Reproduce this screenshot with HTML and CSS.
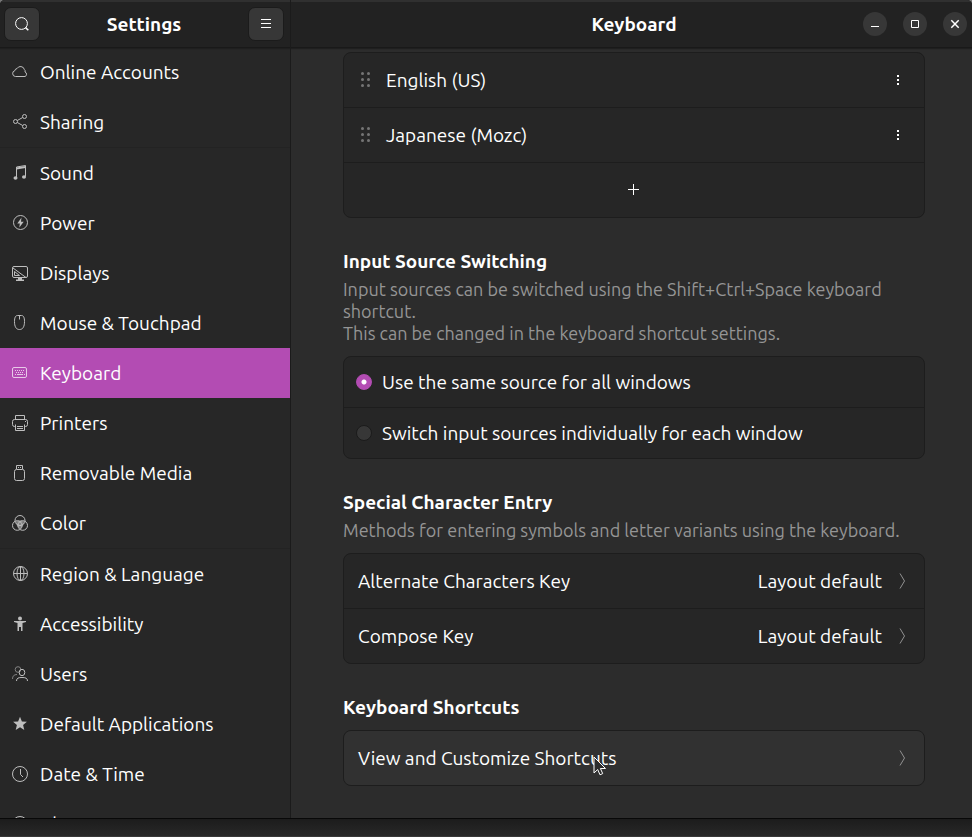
FILE: index.html
```html
<!DOCTYPE html>
<html lang="en">
<head>
<meta charset="utf-8">
<title>Settings</title>
<link rel="stylesheet" href="styles.css">
</head>
<body>
<div class="window">
  <aside class="sidebar">
    <header class="bar bar-side">
      <button class="tool" type="button" aria-label="Search">
        <svg viewBox="0 0 16 16"><circle cx="7.5" cy="7.5" r="5.9"/><path d="M11.5 11.5L14.3 14.3" stroke-width="1.6"/></svg>
      </button>
      <h1>Settings</h1>
      <button class="tool" type="button" aria-label="Menu">
        <svg viewBox="0 0 16 16"><path d="M3 3.5h10M3 7.5h10M3 11.5h10"/></svg>
      </button>
    </header>
    <nav class="panels">
      <ul>
        <li><a href="#"><svg viewBox="0 0 16 16"><path d="M3.500 12.500a3 3 0 0 1-.6-5.900A2.300 2.300 0 0 1 5 4.600 4 4 0 0 1 12.400 5.600a2 2 0 0 1 .6 2.400 2.400 2.400 0 0 1 0 4.500z"/></svg>Online Accounts</a></li>
        <li><a href="#"><svg viewBox="0 0 16 16"><circle cx="3.500" cy="7.500" r="2"/><circle cx="12.500" cy="2.500" r="2"/><circle cx="12.500" cy="12.500" r="2"/><path d="M5.300 6.500l5.400-3M5.300 8.500l5.400 3"/></svg>Sharing</a></li>
      </ul>
      <ul>
        <li><a href="#"><svg viewBox="0 0 16 16"><path d="M4.500 12.500V2l9-1.500v11"/><path d="M4.500 2.500l9-1.500v2l-9 1.500z" class="solid"/><ellipse cx="3.500" cy="13" rx="2" ry="1.800" class="solid"/><ellipse cx="12" cy="12" rx="2" ry="1.800" class="solid"/></svg>Sound</a></li>
        <li><a href="#"><svg viewBox="0 0 16 16"><circle cx="8.500" cy="7.500" r="7"/><path d="M9.500 2.500L5.300 8.500h2.500L7.300 12.500l4.400-5.700H9z" class="solid"/></svg>Power</a></li>
        <li><a href="#"><svg viewBox="0 0 16 16"><rect x=".5" y="1.500" width="15" height="11" rx="1.500"/><path d="M1 3l13 9.500M2.500 6.500v4h5z"/><path d="M6 13h4v1.500h2V16H4v-1.500h2z" class="solid"/></svg>Displays</a></li>
        <li><a href="#"><svg viewBox="0 0 16 16"><path d="M5.500 .5h4c2 0 3 2 3 6 0 5-1.500 8-5 8s-5-3-5-8c0-4 1-6 3-6z"/><path d="M7.500 1v3.500"/></svg>Mouse &amp; Touchpad</a></li>
        <li><a href="#" class="current" aria-current="page"><svg viewBox="0 0 16 16"><rect x=".5" y="2.500" width="14" height="10" rx="1.500"/><path d="M3 5.500h9M4 7.500h8M3 9.500h1M12 9.500h1" stroke-dasharray="1 1"/><path d="M5 9.500h6"/></svg>Keyboard</a></li>
        <li><a href="#"><svg viewBox="0 0 16 16"><path d="M3.500 4V.5h9V4M3.500 11.500h-1a2 2 0 0 1-2-2v-3a2 2 0 0 1 2-2h11a2 2 0 0 1 2 2v3a2 2 0 0 1-2 2h-1M3.500 9.500v6h9v-6M5 11.500h6M5 13.500h6M13 6.500h1"/></svg>Printers</a></li>
        <li><a href="#"><svg viewBox="0 0 16 16"><path d="M4.500 4V.5h6V4M6 2.500h1M8 2.500h1"/><rect x="2.500" y="4.500" width="10" height="11" rx="2"/></svg>Removable Media</a></li>
        <li><a href="#"><svg viewBox="0 0 16 16"><path d="M4 6.500c2-1.500 6-1.500 8 0 0 3-1 5-4 7.500-3-2.500-4-4.500-4-7.500z" class="solid dim"/><circle cx="8" cy="5.500" r="5"/><circle cx="5.300" cy="10.500" r="4.800"/><circle cx="10.700" cy="10.500" r="4.800"/></svg>Color</a></li>
      </ul>
      <ul>
        <li><a href="#"><svg viewBox="0 0 16 16"><circle cx="8.500" cy="7.500" r="7"/><ellipse cx="8.500" cy="7.500" rx="3.500" ry="7"/><path d="M1.500 7.500h14M8.500 .5v14"/></svg>Region &amp; Language</a></li>
        <li><a href="#"><svg viewBox="0 0 16 16"><circle cx="8" cy="2.500" r="2" class="solid"/><path d="M2 5h12v1l-3.500 1v8H9v-4H7v4H5.500V7L2 6z" class="solid"/></svg>Accessibility</a></li>
        <li><a href="#"><svg viewBox="0 0 16 16"><g class="dim"><circle cx="6" cy="3.500" r="2.800"/><path d="M.5 13c0-3 1.500-4.500 4.500-4.500"/></g><ellipse cx="10" cy="6.500" rx="2.800" ry="3.200"/><path d="M4.500 15c0-3 2-3.500 5.500-3.500s5.500 .5 5.500 3.500"/></svg>Users</a></li>
        <li><a href="#"><svg viewBox="0 0 16 16"><path d="M8 .8l1.900 4.600 5 .4-3.800 3.200 1.200 4.900L8 11.300l-4.300 2.600 1.200-4.900L1.100 5.800l5-.4z" class="solid"/></svg>Default Applications</a></li>
        <li><a href="#"><svg viewBox="0 0 16 16"><circle cx="8" cy="8" r="7.500"/><path d="M8.500 3v5.500l2.500 2.500"/></svg>Date &amp; Time</a></li>
        <li><a href="#"><svg viewBox="0 0 16 16"><circle cx="8" cy="8" r="7.500"/><path d="M8 7v5M8 4v1.500"/></svg>About</a></li>
      </ul>
    </nav>
  </aside>
  <section class="panel">
    <header class="bar bar-main">
      <h2>Keyboard</h2>
      <div class="controls">
        <button type="button" aria-label="Minimize"><svg viewBox="0 0 16 16"><path d="M4 10.500h8"/></svg></button>
        <button type="button" aria-label="Maximize"><svg viewBox="0 0 16 16"><path d="M4.500 4.500h7v7h-7z"/></svg></button>
        <button type="button" aria-label="Close"><svg viewBox="0 0 16 16"><path d="M4.300 4.300l7.400 7.400M11.700 4.300l-7.400 7.400" stroke-width="1.500"/></svg></button>
      </div>
    </header>
    <main class="content">
      <section>
        <ul class="card">
          <li class="row"><svg class="grip" viewBox="0 0 16 16"><circle cx="4.500" cy="1.500" r="1.500"/><circle cx="10.500" cy="1.500" r="1.500"/><circle cx="4.500" cy="7.500" r="1.500"/><circle cx="10.500" cy="7.500" r="1.500"/><circle cx="4.500" cy="13.500" r="1.500"/><circle cx="10.500" cy="13.500" r="1.500"/></svg><span class="name">English (US)</span><button class="more" type="button" aria-label="Options for English (US)"><svg viewBox="0 0 16 16"><path d="M7 3h2v2H7zM7 7h2v2H7zM7 11h2v2H7z"/></svg></button></li>
          <li class="row"><svg class="grip" viewBox="0 0 16 16"><circle cx="4.500" cy="1.500" r="1.500"/><circle cx="10.500" cy="1.500" r="1.500"/><circle cx="4.500" cy="7.500" r="1.500"/><circle cx="10.500" cy="7.500" r="1.500"/><circle cx="4.500" cy="13.500" r="1.500"/><circle cx="10.500" cy="13.500" r="1.500"/></svg><span class="name">Japanese (Mozc)</span><button class="more" type="button" aria-label="Options for Japanese (Mozc)"><svg viewBox="0 0 16 16"><path d="M7 3h2v2H7zM7 7h2v2H7zM7 11h2v2H7z"/></svg></button></li>
          <li><button class="row add" type="button" aria-label="Add input source"><svg viewBox="0 0 16 16"><path d="M7.500 2v11M2 7.500h11"/></svg></button></li>
        </ul>
      </section>
      <section>
        <h3>Input Source Switching</h3>
        <p>Input sources can be switched using the Shift+Ctrl+Space keyboard shortcut.<br>This can be changed in the keyboard shortcut settings.</p>
        <div class="card">
          <label class="row option"><input type="radio" name="switching" checked>Use the same source for all windows</label>
          <label class="row option"><input type="radio" name="switching">Switch input sources individually for each window</label>
        </div>
      </section>
      <section>
        <h3>Special Character Entry</h3>
        <p>Methods for entering symbols and letter variants using the keyboard.</p>
        <div class="card">
          <button class="row" type="button"><span class="name">Alternate Characters Key</span><span>Layout default</span><svg class="chevron" viewBox="0 0 16 16"><path d="M6 .5l4.500 7.500L6 15.500"/></svg></button>
          <button class="row" type="button"><span class="name">Compose Key</span><span>Layout default</span><svg class="chevron" viewBox="0 0 16 16"><path d="M6 .5l4.500 7.500L6 15.500"/></svg></button>
        </div>
      </section>
      <section>
        <h3>Keyboard Shortcuts</h3>
        <div class="card shortcuts">
          <button class="row hovered" type="button"><span class="name">View and Customize Shortcuts</span><svg class="chevron" viewBox="0 0 16 16"><path d="M6 .5l4.500 7.500L6 15.500"/></svg></button>
          <svg class="pointer" viewBox="0 0 14 20"><path d="M1 1v16l3.700-3.500 2.300 5.300 2.700-1.200-2.300-5.100h5.100z"/></svg>
        </div>
      </section>
    </main>
  </section>
</div>
<div class="backdrop"></div>
</body>
</html>
```
FILE: styles.css
```css
* {
  box-sizing: border-box;
}

body {
  margin: 0;
  height: 100vh;
  display: flex;
  flex-direction: column;
  overflow: hidden;
  background: #777;
  color: #fff;
  font: 19px/22px Ubuntu, "Noto Sans", sans-serif;
}

h1, h2, h3, p, ul {
  margin: 0;
  padding: 0;
  font-size: inherit;
}

ul {
  list-style: none;
}

button {
  margin: 0;
  padding: 0;
  border: 0;
  background: none;
  color: inherit;
  font: inherit;
  text-align: left;
}

svg {
  display: block;
  flex: none;
  width: 16px;
  height: 16px;
  fill: none;
  stroke: currentColor;
}

.solid {
  fill: currentColor;
  stroke: none;
}

.dim {
  opacity: 0.6;
}

.window {
  flex: 1;
  min-height: 0;
  display: grid;
  grid-template-columns: 291px 1fr;
  border-bottom: 1px solid #080808;
  border-radius: 5px 5px 0 0;
  overflow: hidden;
}

.sidebar, .panel {
  min-width: 0;
  min-height: 0;
  display: flex;
  flex-direction: column;
  overflow: hidden;
}

.sidebar {
  background: #272727;
  border-right: 1px solid #1b1b1b;
}

.panel {
  background: #2c2c2c;
}

.bar {
  position: relative;
  z-index: 1;
  flex: none;
  height: 48px;
  align-items: center;
  background: #222;
  box-shadow: inset 0 2px #303030, inset 0 -1px #191919, 0 1px 1px #1f1f1f;
}

.bar-side {
  display: flex;
  justify-content: space-between;
  padding: 0 6px 0 4px;
}

.tool {
  display: grid;
  place-items: center;
  width: 36px;
  height: 34px;
  background: #373737;
  border: 1px solid #1b1b1b;
  border-radius: 7px;
}

.bar-main {
  display: grid;
  grid-template-columns: 1fr auto 1fr;
  padding: 0 5px 0 10px;
}

.bar-main h2 {
  grid-column: 2;
}

.controls {
  display: flex;
  justify-content: flex-end;
  gap: 16px;
}

.controls button {
  display: grid;
  place-items: center;
  width: 24px;
  height: 24px;
  border-radius: 50%;
  background: #373737;
}

.panels {
  margin-top: -1px;
}

.panels ul + ul {
  border-top: 1px solid #232323;
}

.panels a {
  display: flex;
  align-items: center;
  gap: 12px;
  height: 50px;
  padding: 0 12px;
  color: inherit;
  text-decoration: none;
}

.panels svg {
  color: #bebebe;
}

.panels .current {
  background: #b34cb3;
}

.panels .current svg {
  color: #e8c9e8;
}

.content {
  display: flex;
  flex-direction: column;
  gap: 32px;
  padding: 4px 47px 32px 52px;
}

p {
  margin-top: 6px;
  color: #959595;
  font-size: 18px;
}

h3 + .card, p + .card {
  margin-top: 12px;
}

.card {
  border: 1px solid #1d1d1d;
  border-radius: 8px;
  background: #262626;
}

.card > * + .row, .card > * + li {
  border-top: 1px solid #1d1d1d;
}

.row {
  display: flex;
  align-items: center;
  gap: 12px;
  width: 100%;
  min-height: 54px;
  padding: 0 14px;
}

.card > .row + .row {
  min-height: 55px;
}

.card > .option, .card > .option + .option {
  gap: 10px;
  min-height: 50px;
  padding: 0 12px;
}

.card > .option + .option {
  min-height: 51px;
}

.name {
  flex: 1;
}

.grip {
  fill: #757575;
  stroke: none;
}

.more {
  display: grid;
  place-items: center;
  width: 24px;
  height: 24px;
}

.more svg {
  fill: currentColor;
  stroke: none;
}

.add {
  justify-content: center;
}

.option input {
  appearance: none;
  flex: none;
  margin: 0;
  width: 16px;
  height: 16px;
  border: 1px solid #1b1b1b;
  border-radius: 50%;
  background: #373737;
}

.option input:checked {
  border-color: #b34cb3;
  background: radial-gradient(circle, #fff 2px, #b34cb3 3px);
}

.chevron {
  color: #929292;
}

.shortcuts {
  position: relative;
}

.hovered {
  border-radius: 7px;
  background: #313131;
}

.pointer {
  position: absolute;
  left: 249px;
  top: 25px;
  width: 14px;
  height: 20px;
  fill: #2c2c2c;
  stroke: #fff;
}

.backdrop {
  flex: none;
  height: 18px;
  background: linear-gradient(#1c1c1c, #282828);
  border-bottom: 1px solid #383838;
}
```
